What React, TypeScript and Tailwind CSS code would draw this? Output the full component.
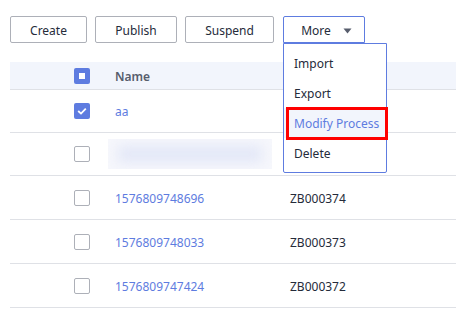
import React from "react";

function Box({ state }: { state: "none" | "checked" | "partial" }) {
  if (state === "checked")
    return (
      <div className="w-4 h-4 rounded-[2px] bg-[#5e7ce0] flex items-center justify-center">
        <svg width="10" height="8" viewBox="0 0 10 8">
          <path d="M1.2 4 L4 6.6 L8.8 1.6" stroke="white" strokeWidth="1.8" fill="none" />
        </svg>
      </div>
    );
  if (state === "partial")
    return (
      <div className="w-4 h-4 rounded-[2px] bg-[#5e7ce0] flex items-center justify-center">
        <div className="w-[6px] h-[6px] bg-white" />
      </div>
    );
  return <div className="w-4 h-4 rounded-[2px] border border-[#adb0b8] bg-white" />;
}

const btn =
  "h-[27px] pt-[2px] rounded-[2px] border border-[#adb0b8] bg-white text-[12px] text-[#252b3a] flex items-center justify-center";

export default function App() {
  return (
    <div
      className="w-[456px] h-[309px] bg-white relative overflow-hidden"
      style={{ fontFamily: '"Noto Sans", "Open Sans", sans-serif' }}
    >
      <div className="flex pt-4 pl-[10px] gap-[8px]">
        <button className={`${btn} w-[77px]`}>Create</button>
        <button className={`${btn} w-[82px]`}>Publish</button>
        <button className={`${btn} w-[89px]`}>Suspend</button>
        <div className="relative ml-[1px]">
          <button className="h-[27px] pt-[2px] w-[82px] rounded-t-[2px] border border-[#5e7ce0] bg-white text-[12px] text-[#252b3a] flex items-center justify-center gap-[12px] pl-[5px]">
            More
            <svg width="9" height="6" viewBox="0 0 9 6">
              <path d="M0.5 0.5 H8.5 L4.5 5.5 Z" fill="#575d6c" />
            </svg>
          </button>
          <div className="absolute left-0 top-[27px] w-[104px] z-10 bg-white border border-[#5e7ce0] rounded-b-[2px] py-[4px] text-[12px] text-[#252b3a]">
            <div className="h-[30px] pt-[2px] flex items-center pl-[10px]">Import</div>
            <div className="h-[30px] pt-[2px] flex items-center pl-[10px]">Export</div>
            <div className="h-[30px] pt-[2px] flex items-center pl-[10px] bg-[#f2f5fc] text-[#5e7ce0] relative whitespace-nowrap">
              Modify Process
              <div className="absolute left-[2px] -top-[1px] -right-[2px] -bottom-[2px] border-[3px] border-[#ff0000]" />
            </div>
            <div className="h-[30px] pt-[2px] flex items-center pl-[10px]">Delete</div>
          </div>
        </div>
      </div>

      <div className="ml-[10px] mt-[19px] text-[12px]">
        <div className="flex items-center h-[28px] bg-[#f2f5fc] border-b border-[#dfe1e6]">
          <div className="w-[64px]" />
          <Box state="partial" />
          <div className="w-[25px]" />
          <div className="font-semibold text-[#575d6c] pt-[2px]">Name</div>
        </div>
        <div className="flex items-center h-[43px] border-b border-[#dfe1e6]">
          <div className="w-[64px]" />
          <Box state="checked" />
          <div className="w-[25px]" />
          <div className="text-[#5e7ce0] pt-[2px]">aa</div>
        </div>
        <div className="flex items-center h-[43px] border-b border-[#dfe1e6]">
          <div className="w-[64px]" />
          <Box state="none" />
          <div className="w-[18px]" />
          <div className="w-[164px] h-[30px] bg-[#f6f7fc] relative overflow-hidden">
            <div className="absolute left-[10px] right-[10px] top-[6px] bottom-[6px] bg-[#e4e8f7] blur-[6px]" />
          </div>
        </div>
        {[
          ["1576809748696", "ZB000374"],
          ["1576809748033", "ZB000373"],
          ["1576809747424", "ZB000372"],
        ].map(([n, c]) => (
          <div key={n} className="flex items-center h-[44px] border-b border-[#dfe1e6]">
            <div className="w-[64px]" />
            <Box state="none" />
            <div className="w-[25px]" />
            <div className="w-[175px] text-[#5e7ce0] pt-[2px]">{n}</div>
            <div className="text-[#252b3a] pt-[2px]">{c}</div>
          </div>
        ))}
      </div>
    </div>
  );
}
